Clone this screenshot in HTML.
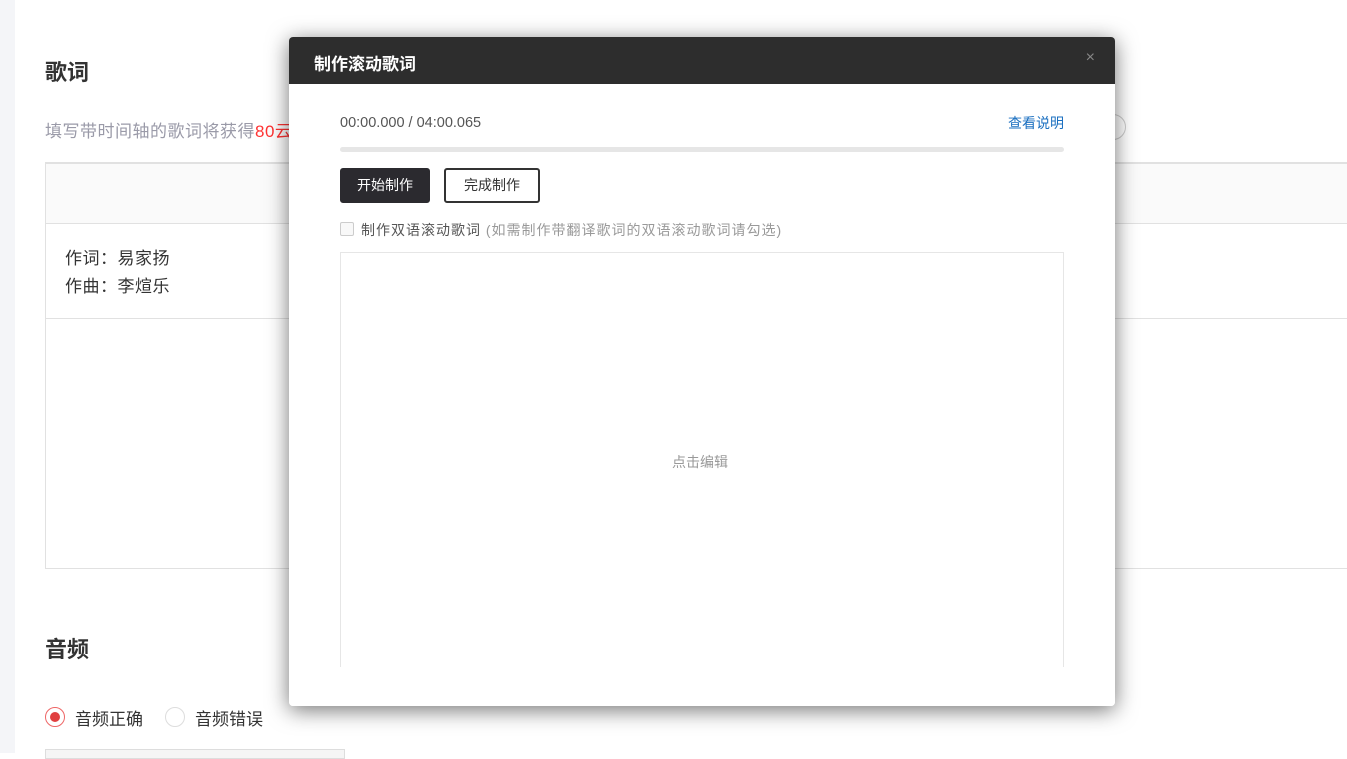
<!DOCTYPE html>
<html><head><meta charset="utf-8"><style>
*{margin:0;padding:0;box-sizing:border-box}
body{width:1347px;height:753px;overflow:hidden;background:#fff;font-family:"Liberation Sans","Noto Sans CJK SC",sans-serif;position:relative}
.strip{position:absolute;left:0;top:0;width:15px;height:753px;background:#f4f5f8}
.a{position:absolute}
.h{font-size:22px;font-weight:bold;color:#333}
.tbl{left:45px;top:162px;width:1310px;height:407px;border:1px solid #e1e1e1;border-top:2px solid #e1e1e1}
.thead{position:absolute;left:0;top:0;right:0;height:60px;background:#fafafa;border-bottom:1px solid #e1e1e1}
.row{position:absolute;left:0;top:60px;right:0;height:95px;border-bottom:1px solid #e1e1e1;font-size:17px;letter-spacing:0.5px;color:#333;padding:21px 0 0 19px;line-height:28px}
.radio{width:20px;height:20px;border-radius:50%;border:1px solid #ddd;background:#fff}
.modal{left:289px;top:37px;width:826px;height:669px;background:#fff;border-radius:4px;box-shadow:0 4px 22px rgba(0,0,0,.55);overflow:hidden}
.mh{height:47px;background:#2d2d2d;color:#fff;font-size:17px;font-weight:bold;padding:13px 0 0 25px}
.btn{position:absolute;height:35px;font-size:14px;border-radius:3px;text-align:center;line-height:33px}
</style></head><body>
<div class="strip"></div>
<div class="a h" style="left:45px;top:55px">歌词</div>
<div class="a" style="left:45px;top:117px;font-size:17px;letter-spacing:0.5px;color:#9a9aa8">填写带时间轴的歌词将获得<span style="color:#f33">80云</span></div>
<div class="a" style="left:1100px;top:114px;width:26px;height:26px;border-radius:50%;border:1px solid #ccc"></div>
<div class="a tbl"><div class="thead"></div><div class="row">作词：易家扬<br>作曲：李煊乐</div></div>
<div class="a h" style="left:45px;top:632px">音频</div>
<div class="a radio" style="left:45px;top:707px;border-color:#e66"><div style="width:10px;height:10px;border-radius:50%;background:#e04040;margin:4px"></div></div>
<div class="a" style="left:75px;top:705px;font-size:17px;color:#333">音频正确</div>
<div class="a radio" style="left:165px;top:707px"></div>
<div class="a" style="left:195px;top:705px;font-size:17px;color:#333">音频错误</div>
<div class="a" style="left:45px;top:749px;width:300px;height:10px;border:1px solid #ddd;background:#f5f5f5"></div>

<div class="a modal">
<div class="mh">制作滚动歌词</div>
<div class="a" style="right:20px;top:12px;color:#888;font-size:16px">×</div>
<div class="a" style="left:51px;top:76px;font-size:14.5px;line-height:20px;color:#555">00:00.000 / 04:00.065</div>
<div class="a" style="right:51px;top:76px;font-size:14px;color:#1a6fc0">查看说明</div>
<div class="a" style="left:51px;top:110px;width:724px;height:5px;border-radius:3px;background:#e6e6e6"></div>
<div class="btn" style="left:51px;top:131px;width:90px;background:#2b2a2f;color:#fff;border:1px solid #2b2a2f">开始制作</div>
<div class="btn" style="left:155px;top:131px;width:96px;border:2px solid #333;color:#333;line-height:31px">完成制作</div>
<div class="a" style="left:51px;top:185px;width:14px;height:14px;border:1px solid #ccc;border-radius:2px;background:#f8f8f8"></div>
<div class="a" style="left:72px;top:183px;font-size:14px;letter-spacing:1px;color:#555">制作双语滚动歌词 <span style="color:#999">(如需制作带翻译歌词的双语滚动歌词请勾选)</span></div>
<div class="a" style="left:51px;top:215px;width:724px;height:430px;border:1px solid #e6e6e6;border-bottom:none"></div>
<div class="a" style="left:383px;top:415px;font-size:14px;color:#999">点击编辑</div>
<div class="a" style="left:0;top:630px;width:826px;height:39px;background:#fff"></div>
</div>
</body></html>
